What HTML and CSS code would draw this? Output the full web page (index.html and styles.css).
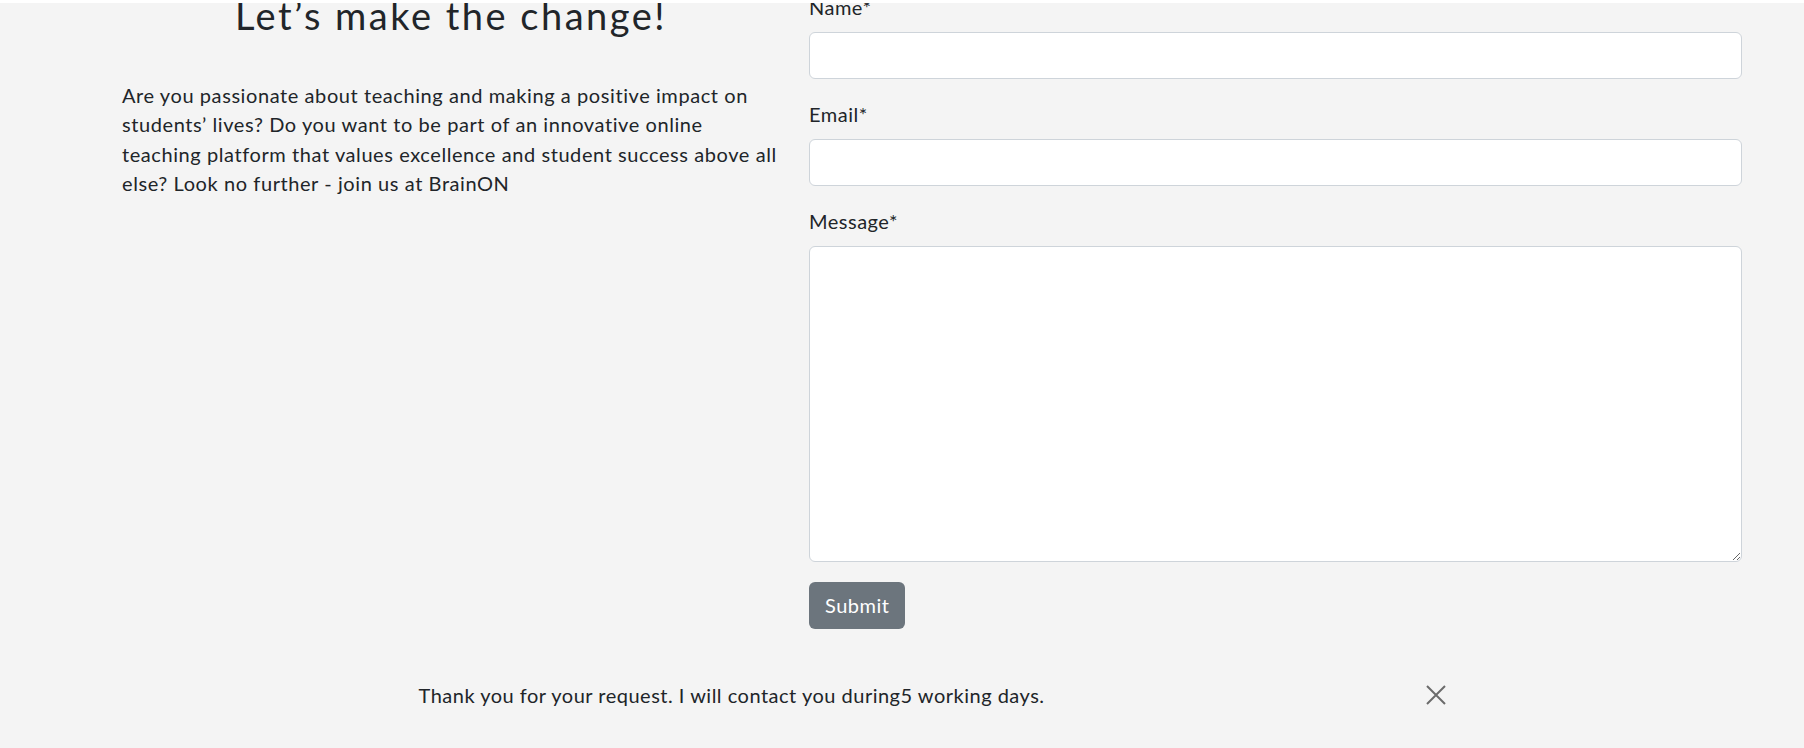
FILE: index.html
```html
<!DOCTYPE html>
<html lang="en">
<head>
<meta charset="utf-8">
<title>Let's make the change!</title>
<link rel="stylesheet" href="styles.css">
</head>
<body>
<div class="top-edge"></div>
<main class="page">
  <section class="contact">
    <div class="intro">
      <h1 class="intro-title">Let’s make the change!</h1>
      <p class="intro-text">Are you passionate about teaching and making a positive impact on students’ lives? Do you want to be part of an innovative online teaching platform that values excellence and student success above all else? Look no further - join us at BrainON</p>
    </div>
    <form class="form">
      <div class="field">
        <label class="field-label" for="name">Name*</label>
        <input class="field-input" id="name" type="text">
      </div>
      <div class="field">
        <label class="field-label" for="email">Email*</label>
        <input class="field-input" id="email" type="email">
      </div>
      <div class="field">
        <label class="field-label" for="message">Message*</label>
        <textarea class="field-input field-textarea" id="message"></textarea>
      </div>
      <button class="submit" type="button">Submit</button>
    </form>
  </section>
  <div class="toast">
    <span class="toast-text">Thank you for your request. I will contact you during5 working days.</span>
    <button class="toast-close" type="button" aria-label="Close">
      <svg width="20" height="20" viewBox="0 0 20 20"><path d="M1 1 L19 19 M19 1 L1 19" stroke="#6b6b6b" stroke-width="2" fill="none"/></svg>
    </button>
  </div>
</main>
</body>
</html>
```
FILE: styles.css
```css
* { box-sizing: border-box; }
html, body { margin: 0; padding: 0; }
body {
  background: #f4f4f4;
  color: #212529;
  font-family: "Lato", "Open Sans", sans-serif;
  font-size: 20px;
  letter-spacing: 0.5px;
  overflow: hidden;
}
.top-edge {
  position: fixed;
  top: 0; left: 0; right: 0;
  height: 3px;
  background: #ffffff;
  z-index: 5;
}
.page {
  margin-top: -8px;
  padding: 0 62px 0 122px;
}
.contact {
  display: grid;
  grid-template-columns: 658px 933px;
  column-gap: 29px;
}
.intro-title {
  margin: 0;
  font-size: 38px;
  font-weight: 400;
  line-height: 46px;
  letter-spacing: 2.5px;
  text-align: center;
}
.intro-text {
  margin: 42.5px 0 0;
  line-height: 29.5px;
  letter-spacing: 0.58px;
}
.field { margin-bottom: 20px; }
.field-label {
  display: block;
  line-height: 30px;
  margin-bottom: 10px;
}
.field-input {
  display: block;
  width: 100%;
  height: 47px;
  border: 1px solid #ced4da;
  border-radius: 6px;
  background: #fff;
  font: inherit;
  padding: 6px 12px;
}
.field-textarea {
  height: 316px;
  resize: vertical;
}
.submit {
  display: block;
  min-width: 96px;
  height: 47px;
  padding: 0 16px;
  border: 0;
  border-radius: 6px;
  background: #6c757d;
  color: #fff;
  font: inherit;
  letter-spacing: 0.5px;
  line-height: 47px;
}
.toast {
  width: 1067px;
  margin: 41px auto 0;
  padding: 0 20px;
  height: 50px;
  display: flex;
  align-items: center;
  justify-content: space-between;
}
.toast-close {
  border: 0;
  background: none;
  padding: 0;
  width: 20px;
  height: 20px;
  display: flex;
}
```
